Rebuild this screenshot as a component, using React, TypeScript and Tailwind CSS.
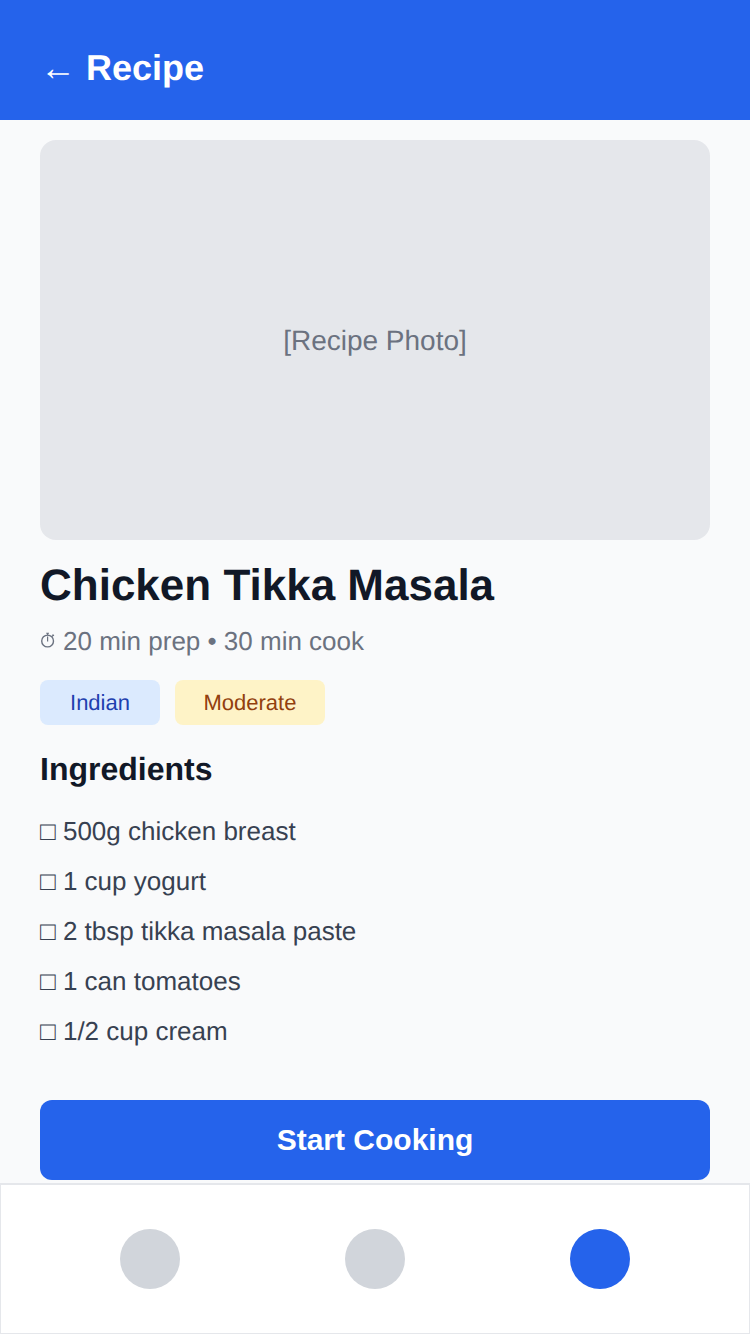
const ingredients = [
  "500g chicken breast",
  "1 cup yogurt",
  "2 tbsp tikka masala paste",
  "1 can tomatoes",
  "1/2 cup cream",
];

function Stopwatch() {
  return (
    <svg viewBox="0 0 16 18" className="mr-[7px] h-[18px] w-4 shrink-0" fill="none" stroke="currentColor">
      <circle cx="7.6" cy="9" r="5.9" strokeWidth="1.4" />
      <path d="M7.6 4.5V9.4" strokeWidth="1.2" />
      <path d="M6.2 1.3H9M7.6 1.2V3.2M12.6 2.5L13.9 3.8M13.3 3.1L11.9 4.5" strokeWidth="1.1" />
    </svg>
  );
}

export default function App() {
  return (
    <div className="flex h-[1334px] w-[750px] flex-col overflow-hidden bg-[#f9fafb] font-['Liberation_Sans',Arial,sans-serif] [text-rendering:geometricPrecision]">
      <header className="h-[120px] shrink-0 bg-[#2563eb] px-10 pt-[47px]">
        <h1 className="whitespace-pre text-[36px] font-bold leading-[41px] text-white">← Recipe</h1>
      </header>
      <main className="flex h-[1063px] shrink-0 flex-col px-10 pt-5">
        <div className="flex h-[400px] shrink-0 items-center justify-center rounded-2xl bg-[#e5e7eb] pt-0.5 text-[28px] leading-8 text-[#6b7280]">
          [Recipe Photo]
        </div>
        <h2 className="mt-[21px] text-[44px] font-bold leading-[50px] text-[#111827]">Chicken Tikka Masala</h2>
        <p className="mt-[15px] flex h-[30px] items-center text-[26px] leading-[30px] text-[#6b7280]">
          <Stopwatch />20 min prep • 30 min cook
        </p>
        <div className="mt-6 flex gap-[15px] text-[22px]">
          <span className="flex h-[45px] w-[120px] items-center justify-center rounded-lg bg-[#dbeafe] text-[#1e40af]">Indian</span>
          <span className="flex h-[45px] w-[150px] items-center justify-center rounded-lg bg-[#fef3c7] text-[#92400e]">Moderate</span>
        </div>
        <h3 className="mt-[26px] text-[32px] font-bold leading-9 text-[#111827]">Ingredients</h3>
        <ul className="mt-[19px] text-[26px] leading-[50px] text-[#374151]">
          {ingredients.map((item) => (
            <li key={item} className="h-[50px]">□ {item}</li>
          ))}
        </ul>
        <button className="mt-auto mb-[3px] h-20 shrink-0 rounded-xl bg-[#2563eb] pb-0.5 text-[30px] font-bold text-white">
          Start Cooking
        </button>
      </main>
      <nav className="flex h-[151px] shrink-0 items-center justify-between border border-t-2 border-[#e5e7eb] bg-white px-[119px]">
        <span className="size-[60px] rounded-full bg-[#d1d5db]" />
        <span className="size-[60px] rounded-full bg-[#d1d5db]" />
        <span className="size-[60px] rounded-full bg-[#2563eb]" />
      </nav>
    </div>
  );
}
